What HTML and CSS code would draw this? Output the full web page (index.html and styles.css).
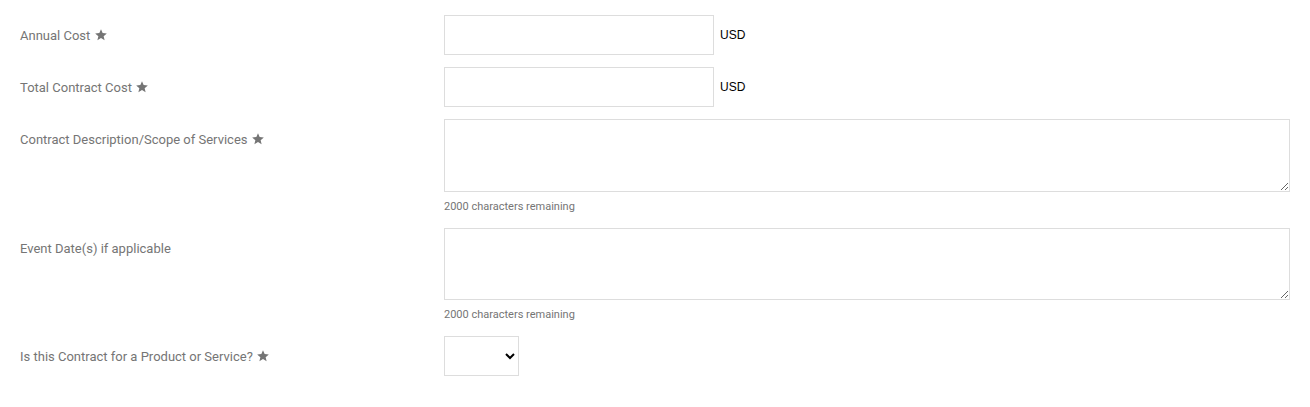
FILE: index.html
```html
<!DOCTYPE html>
<html lang="en">
<head>
    <meta charset="UTF-8">
    <meta name="viewport" content="width=device-width, initial-scale=1.0">
    <title>Contract Request</title>
    <link rel="stylesheet" href="styles.css">
</head>
<body>
    <form class="contract-form">
        <div class="form-row">
            <label class="field-label" for="annualCost">Annual Cost
                <svg class="req" viewBox="0 0 24 24"><path d="M12 17.27L18.18 21l-1.64-7.03L22 9.24l-7.19-.61L12 2 9.19 8.63 2 9.24l5.46 4.73L5.82 21z"/></svg>
            </label>
            <div class="field">
                <input type="text" id="annualCost" class="money">
                <span class="currency">USD</span>
            </div>
        </div>
        <div class="form-row">
            <label class="field-label" for="totalCost">Total Contract Cost
                <svg class="req" viewBox="0 0 24 24"><path d="M12 17.27L18.18 21l-1.64-7.03L22 9.24l-7.19-.61L12 2 9.19 8.63 2 9.24l5.46 4.73L5.82 21z"/></svg>
            </label>
            <div class="field">
                <input type="text" id="totalCost" class="money">
                <span class="currency">USD</span>
            </div>
        </div>
        <div class="form-row">
            <label class="field-label" for="scope">Contract Description/Scope of Services
                <svg class="req" viewBox="0 0 24 24"><path d="M12 17.27L18.18 21l-1.64-7.03L22 9.24l-7.19-.61L12 2 9.19 8.63 2 9.24l5.46 4.73L5.82 21z"/></svg>
            </label>
            <div class="field field-stack">
                <textarea id="scope" maxlength="2000"></textarea>
                <div class="counter">2000 characters remaining</div>
            </div>
        </div>
        <div class="form-row">
            <label class="field-label" for="eventDates">Event Date(s) if applicable</label>
            <div class="field field-stack">
                <textarea id="eventDates" class="short" maxlength="2000"></textarea>
                <div class="counter">2000 characters remaining</div>
            </div>
        </div>
        <div class="form-row">
            <label class="field-label" for="kind">Is this Contract for a Product or Service?
                <svg class="req" viewBox="0 0 24 24"><path d="M12 17.27L18.18 21l-1.64-7.03L22 9.24l-7.19-.61L12 2 9.19 8.63 2 9.24l5.46 4.73L5.82 21z"/></svg>
            </label>
            <div class="field">
                <select id="kind">
                    <option></option>
                    <option>Product</option>
                    <option>Service</option>
                </select>
            </div>
        </div>
    </form>
</body>
</html>
```

FILE: styles.css
```css
body {
    margin: 0;
    font-family: Roboto, 'Liberation Sans', sans-serif;
    background: #ffffff;
    color: #757575;
}
.contract-form {
    padding: 15px 20px 0 20px;
}
.form-row {
    display: grid;
    grid-template-columns: 424px 1fr;
    margin-bottom: 12px;
}
.field-label {
    font-size: 13px;
    line-height: 16px;
    padding-top: 13px;
    color: #757575;
}
.req {
    width: 14px;
    height: 14px;
    fill: #757575;
    vertical-align: -2px;
}
.field {
    display: flex;
    align-items: center;
}
.field-stack {
    flex-direction: column;
    align-items: stretch;
}
input.money {
    width: 270px;
    height: 40px;
    box-sizing: border-box;
    border: 1px solid #dddddd;
    padding: 6px 10px;
    margin: 0;
    font-size: 13px;
}
.currency {
    margin-left: 6px;
    font-family: 'Liberation Sans', Arial, sans-serif;
    font-size: 12px;
    color: #000000;
}
textarea {
    display: block;
    width: 100%;
    height: 73px;
    box-sizing: border-box;
    border: 1px solid #dddddd;
    margin: 0;
    padding: 6px 10px;
    font-family: Roboto, sans-serif;
    font-size: 13px;
}
textarea.short {
    height: 72px;
}
.counter {
    font-size: 11px;
    line-height: 16px;
    margin: 7px 0 1px 0;
    color: #757575;
}
select {
    width: 75px;
    height: 40px;
    box-sizing: border-box;
    border: 1px solid #dddddd;
    background: #ffffff;
    margin: 0;
    font-size: 13px;
}
```
